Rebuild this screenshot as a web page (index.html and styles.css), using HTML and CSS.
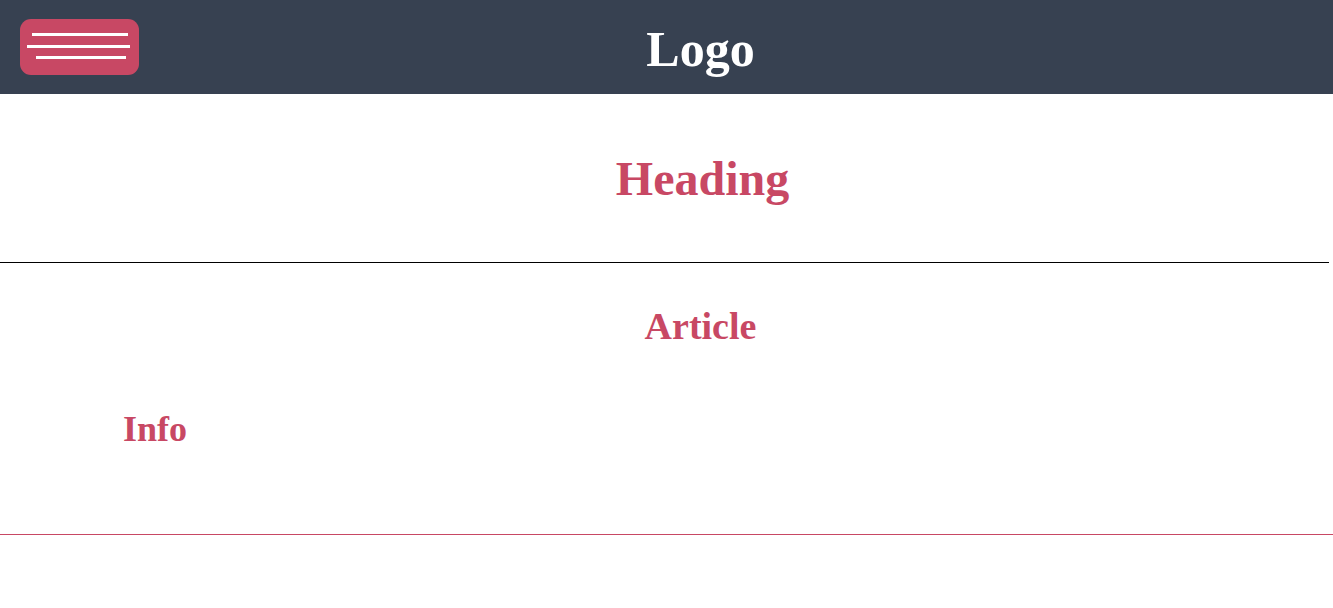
FILE: index.html
```html
<!DOCTYPE html>
<html>
<head>
<meta charset="utf-8">
<link rel="stylesheet" href="styles.css">
</head>
<body>
<header class="topbar">
  <div class="left">
    <button class="menu" aria-label="Menu">
      <span class="bar bar1"></span>
      <span class="bar bar2"></span>
      <span class="bar bar3"></span>
    </button>
  </div>
  <div class="logo">Logo</div>
  <div class="right"></div>
</header>
<section class="hero">
  <h1 class="heading">Heading</h1>
</section>
<hr class="divider">
<main class="content">
  <h2 class="article">Article</h2>
  <h2 class="info">Info</h2>
</main>
<footer class="footer"></footer>
</body>
</html>
```
FILE: styles.css
```css
html, body {
  margin: 0;
  padding: 0;
  background: #ffffff;
  font-family: "Liberation Serif", "DejaVu Serif", serif;
}
.topbar {
  height: 94px;
  background: #374151;
  display: grid;
  grid-template-columns: 1fr auto 1fr;
  align-items: center;
}
.left {
  padding-left: 20px;
  display: flex;
  align-items: center;
}
.menu {
  width: 119px;
  height: 56px;
  margin-top: -1px;
  background: #c84864;
  border: none;
  border-radius: 11px;
  padding: 0;
  display: flex;
  flex-direction: column;
  align-items: flex-start;
  justify-content: flex-start;
}
.bar {
  display: block;
  height: 3px;
  background: #ffffff;
}
.bar1 { width: 96px; margin: 14px 0 0 12px; }
.bar2 { width: 103px; margin: 9px 0 0 7px; }
.bar3 { width: 90px; margin: 8px 0 0 16px; }
.logo {
  color: #ffffff;
  font-weight: bold;
  font-size: 50px;
  line-height: 1;
  padding-top: 4px;
  padding-left: 68px;
}
.hero {
  height: 168px;
  display: flex;
  align-items: center;
  justify-content: center;
}
.heading {
  margin: 0;
  padding-left: 72px;
  padding-top: 2px;
  color: #c84864;
  font-size: 48px;
  font-weight: bold;
  line-height: 1;
}
.divider {
  margin: 0;
  width: 1329px;
  border: none;
  border-top: 1px solid #000000;
  height: 0;
}
.content {
  height: 271px;
  border-bottom: 1px solid #c84864;
  display: flex;
  flex-direction: column;
}
.article {
  margin: 44px 0 0 0;
  padding-left: 68px;
  text-align: center;
  color: #c84864;
  font-size: 38px;
  font-weight: bold;
  line-height: 1;
}
.info {
  margin: 66px 0 0 123px;
  color: #c84864;
  font-size: 36px;
  font-weight: bold;
  line-height: 1;
}
.footer {
  height: 73px;
}
```
